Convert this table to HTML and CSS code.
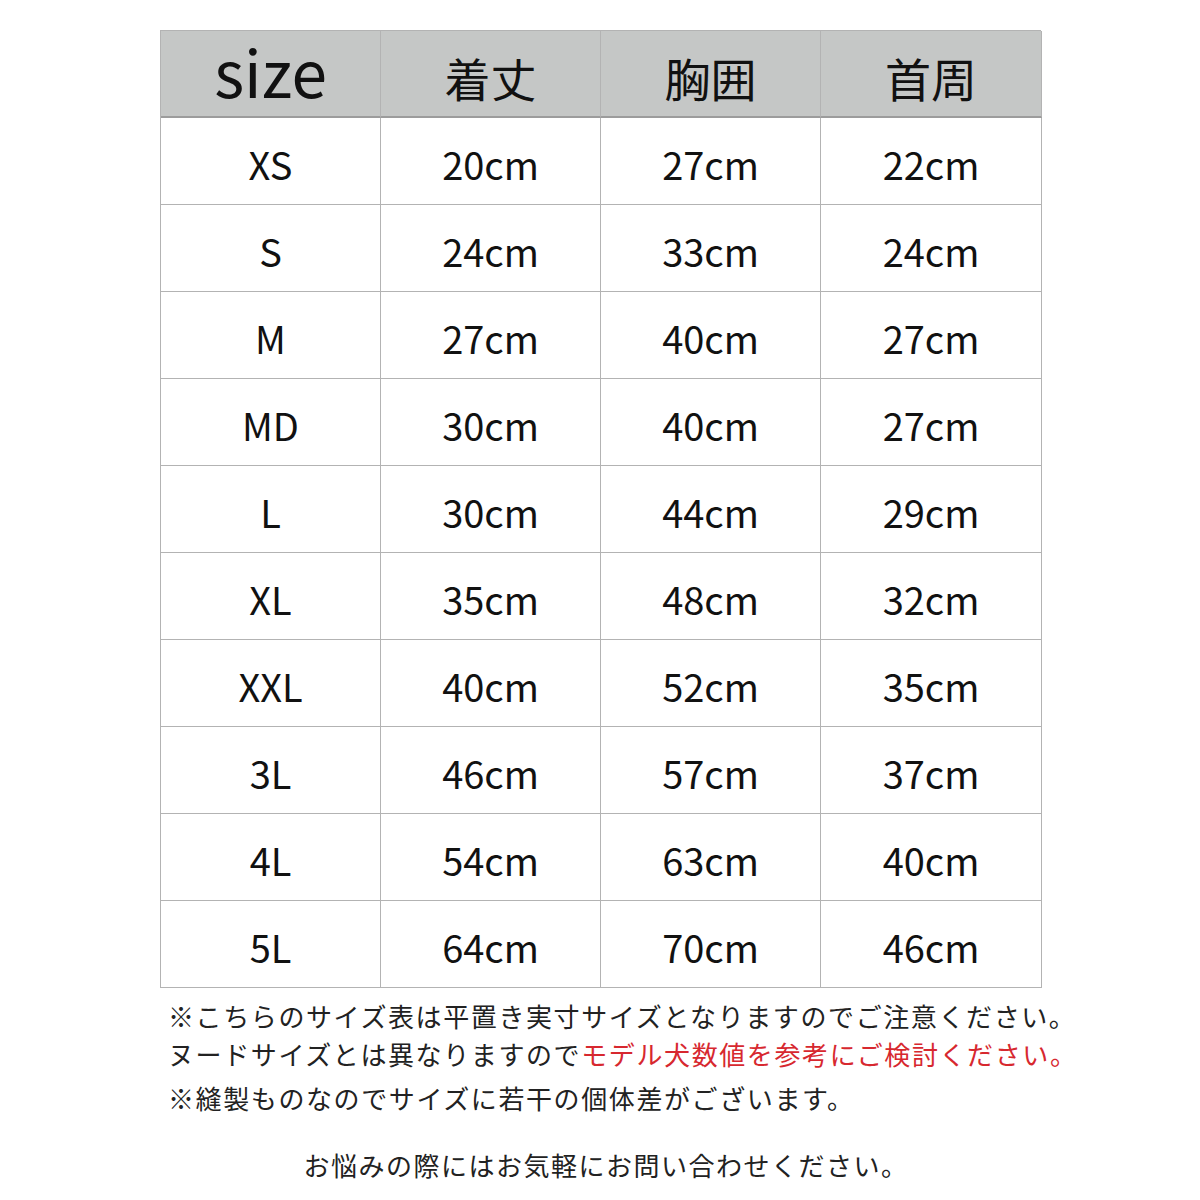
FILE: index.html
```html
<!DOCTYPE html>
<html lang="ja">
<head>
<meta charset="utf-8">
<link rel="stylesheet" href="styles.css">
</head>
<body>
<div class="page">
  <div class="table">
    <div class="cell head head-size">size</div>
    <div class="cell head">着丈</div>
    <div class="cell head">胸囲</div>
    <div class="cell head">首周</div>

    <div class="cell">XS</div><div class="cell">20cm</div><div class="cell">27cm</div><div class="cell">22cm</div>
    <div class="cell">S</div><div class="cell">24cm</div><div class="cell">33cm</div><div class="cell">24cm</div>
    <div class="cell">M</div><div class="cell">27cm</div><div class="cell">40cm</div><div class="cell">27cm</div>
    <div class="cell">MD</div><div class="cell">30cm</div><div class="cell">40cm</div><div class="cell">27cm</div>
    <div class="cell">L</div><div class="cell">30cm</div><div class="cell">44cm</div><div class="cell">29cm</div>
    <div class="cell">XL</div><div class="cell">35cm</div><div class="cell">48cm</div><div class="cell">32cm</div>
    <div class="cell">XXL</div><div class="cell">40cm</div><div class="cell">52cm</div><div class="cell">35cm</div>
    <div class="cell">3L</div><div class="cell">46cm</div><div class="cell">57cm</div><div class="cell">37cm</div>
    <div class="cell">4L</div><div class="cell">54cm</div><div class="cell">63cm</div><div class="cell">40cm</div>
    <div class="cell">5L</div><div class="cell">64cm</div><div class="cell">70cm</div><div class="cell">46cm</div>
  </div>

  <div class="notes">
    <p class="note">※こちらのサイズ表は平置き実寸サイズとなりますのでご注意ください。</p>
    <p class="note">ヌードサイズとは異なりますので<span class="red">モデル犬数値を参考にご検討ください。</span></p>
    <p class="note note-3">※縫製ものなのでサイズに若干の個体差がございます。</p>
  </div>

  <p class="contact">お悩みの際にはお気軽にお問い合わせください。</p>
</div>
</body>
</html>
```

FILE: styles.css
```css
html, body {
  margin: 0;
  padding: 0;
  background: #ffffff;
}

body {
  font-family: "Noto Sans CJK JP", "Noto Sans", sans-serif;
  color: #1a1a1a;
  width: 1200px;
  height: 1200px;
  overflow: hidden;
}

.page {
  padding: 30px 0 0 160px;
}

.table {
  display: grid;
  grid-template-columns: 220px 220px 220px 221px;
  grid-template-rows: 87px repeat(10, 87px);
  width: 881px;
  border-top: 1px solid #b3b3b3;
  border-left: 1px solid #b3b3b3;
  box-sizing: border-box;
}

.cell {
  display: flex;
  align-items: center;
  justify-content: center;
  border-right: 1px solid #b3b3b3;
  border-bottom: 1px solid #b3b3b3;
  font-size: 38px;
  line-height: 1;
  padding-top: 6px;
  box-sizing: border-box;
  color: #111;
}

.head {
  background: #c5c7c6;
  font-size: 46px;
  border-bottom: 2px solid #9c9c9c;
  padding-top: 6px;
}

.head-size {
  font-size: 64px;
  padding-top: 0;
  padding-bottom: 8px;
}

.notes {
  margin-top: 9px;
  margin-left: 8px;
}

.note {
  margin: 0;
  font-size: 26px;
  letter-spacing: 1.6px;
  line-height: 38px;
  color: #222;
  white-space: nowrap;
}

.note-3 {
  margin-top: 6px;
}

.red {
  color: #d7282f;
}

.contact {
  margin: 29px 0 0 -160px;
  padding-left: 12px;
  width: 1200px;
  box-sizing: border-box;
  text-align: center;
  font-size: 26px;
  letter-spacing: 1.5px;
  line-height: 38px;
  color: #222;
}
```
